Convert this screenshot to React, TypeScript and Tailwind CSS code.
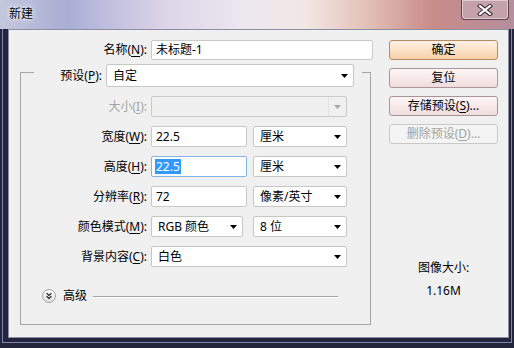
import type { ReactNode } from "react";

function Key({ k }: { k: string }) {
  return <span className="underline underline-offset-2">{k}</span>;
}

function Caret({ disabled }: { disabled?: boolean }) {
  return (
    <svg width="7" height="4" viewBox="0 0 7 4" className="shrink-0">
      <path d="M0 0h7L3.5 4z" fill={disabled ? "#a8a8a8" : "#000"} />
    </svg>
  );
}

function Select({ value, className }: { value?: string; className: string }) {
  return (
    <div
      className={`${className} flex items-center justify-between pl-[6px] pr-[5px] bg-white border border-[#c6c6c6] rounded-[2px]`}
    >
      <span>{value}</span>
      <Caret />
    </div>
  );
}

function Input({ value, focused }: { value: string; focused?: boolean }) {
  return (
    <div
      className={`w-[96px] h-[21px] flex items-center pl-[3px] bg-white border rounded-[2px] ${
        focused ? "border-[#84b4e6]" : "border-[#c9c9c9]"
      }`}
    >
      {focused ? (
        <span className="bg-[#3399ff] text-white px-[1px] leading-[15px]">{value}</span>
      ) : (
        <span className="px-[1px]">{value}</span>
      )}
    </div>
  );
}

function Row({ label, muted, children }: { label: ReactNode; muted?: boolean; children: ReactNode }) {
  return (
    <div className="mt-[9px] h-[21px] flex items-center">
      <div className={`w-[126px] text-right ${muted ? "text-[#a3a3a3]" : ""}`}>{label}</div>
      <div className="ml-[4px] flex gap-[6px]">{children}</div>
    </div>
  );
}

function Button({ children, kind }: { children: ReactNode; kind: "default" | "normal" | "disabled" }) {
  const look =
    kind === "default"
      ? "border-[#b58c66] bg-[linear-gradient(#fdf1e4,#fbe2c8_50%,#f5cfa6)]"
      : kind === "normal"
      ? "border-[#a9959a] bg-[linear-gradient(#fdf6f6,#f8e9e9_50%,#efdcdc)]"
      : "border-[#c9c9c9] bg-[#f4f4f4] text-[#a3a3a3]";
  return (
    <div className={`h-[20px] flex items-center justify-center border rounded-[3px] ${look}`}>
      {children}
    </div>
  );
}

export default function App() {
  return (
    <div className="w-[514px] h-[348px] overflow-hidden flex flex-col bg-[#23253c] text-[12px] text-black font-['Noto_Sans','Noto_Sans_CJK_SC',sans-serif]">
      {/* Title bar */}
      <div className="h-[29px] shrink-0 flex items-start bg-[linear-gradient(90deg,#c4c8dc_0%,#a9aed4_13%,#bdbcdd_20%,#dcd4e8_32%,#eee8ef_48%,#f1e6e2_60%,#e2beb4_72%,#c98c8a_84%,#b48e9c_100%)]">
        <span className="ml-[9px] mt-[6px] leading-[16px] [text-shadow:0_0_6px_#fff,0_0_3px_#fff]">新建</span>
        <div className="ml-auto mr-[5px] w-[48px] h-[20px] border border-t-0 border-[#5c4450] rounded-b-[4px] bg-[#c4a2ac] shadow-[inset_0_0_0_1px_rgba(255,255,255,0.45)] flex items-center justify-center">
          <svg width="16" height="12" viewBox="0 0 16 12">
            <path d="M3 2l10 8M13 2L3 10" stroke="#3b2a35" strokeWidth="4.2" strokeLinecap="square" />
            <path d="M3 2l10 8M13 2L3 10" stroke="#fff" strokeWidth="2.2" strokeLinecap="square" />
          </svg>
        </div>
      </div>

      {/* Frame body */}
      <div className="flex-1 mx-[2px] mb-[5px] border-x border-b border-[#7f86ad] pl-[5px] pr-[2px] pb-[4px] flex">
        <div className="flex-1 border border-[#8c8ea2] bg-[#f0f0f0] flex">
          {/* Left column */}
          <div className="w-[364px] flex flex-col">
            <div className="mt-[10px] h-[20px] flex items-center">
              <div className="w-[138px] text-right">
                名称(<Key k="N" />):
              </div>
              <div className="ml-[4px] w-[222px] h-[20px] flex items-center pl-[4px] bg-white border border-[#c9c9c9] rounded-[2px]">
                未标题-1
              </div>
            </div>

            {/* Preset group */}
            <div className="mt-[12px] ml-[11px] w-[351px] h-[253px] border border-[#a6a6a6] flex flex-col">
              <div className="-mt-[9px] ml-[13px] w-[328px] h-[23px] bg-[#f0f0f0] flex items-center">
                <div className="w-[68px] text-right">
                  预设(<Key k="P" />):
                </div>
                <Select value="自定" className="ml-[4px] w-[248px] h-[23px]" />
              </div>

              <Row
                muted
                label={
                  <>
                    大小(<Key k="I" />):
                  </>
                }
              >
                <div className="w-[196px] h-[21px] flex items-center justify-end bg-[#f0f0f0] border border-[#cacaca] rounded-[2px]">
                  <div className="h-full w-[18px] border-l border-[#e2e2e2] flex items-center justify-center">
                    <Caret disabled />
                  </div>
                </div>
              </Row>

              <Row
                label={
                  <>
                    宽度(<Key k="W" />):
                  </>
                }
              >
                <Input value="22.5" />
                <Select value="厘米" className="w-[94px] h-[21px]" />
              </Row>

              <Row
                label={
                  <>
                    高度(<Key k="H" />):
                  </>
                }
              >
                <Input value="22.5" focused />
                <Select value="厘米" className="w-[94px] h-[21px]" />
              </Row>

              <Row
                label={
                  <>
                    分辨率(<Key k="R" />):
                  </>
                }
              >
                <Input value="72" />
                <Select value="像素/英寸" className="w-[94px] h-[21px]" />
              </Row>

              <Row
                label={
                  <>
                    颜色模式(<Key k="M" />):
                  </>
                }
              >
                <Select value="RGB 颜色" className="w-[92px] h-[21px]" />
                <Select value="8 位" className="ml-[4px] w-[94px] h-[21px]" />
              </Row>

              <Row
                label={
                  <>
                    背景内容(<Key k="C" />):
                  </>
                }
              >
                <Select value="白色" className="w-[196px] h-[21px]" />
              </Row>

              {/* Advanced */}
              <div className="mt-[22px] ml-[21px] mr-[32px] h-[14px] flex items-center">
                <svg width="14" height="14" viewBox="0 0 14 14" className="shrink-0">
                  <defs>
                    <linearGradient id="adv" x1="0" y1="0" x2="0" y2="1">
                      <stop offset="0" stopColor="#ffffff" />
                      <stop offset="1" stopColor="#dcdcdc" />
                    </linearGradient>
                  </defs>
                  <circle cx="7" cy="7" r="6.5" fill="url(#adv)" stroke="#a4a4a4" />
                  <path d="M4.6 4.2L7 6.4l2.4-2.2M4.6 7.2L7 9.4l2.4-2.2" fill="none" stroke="#2f2f2f" strokeWidth="1.3" />
                </svg>
                <span className="ml-[7px] leading-[14px]">高级</span>
                <div className="ml-[6px] flex-1 h-px bg-[#a6a6a6] shadow-[0_1px_0_#fff]" />
              </div>
            </div>
          </div>

          {/* Right column */}
          <div className="ml-[16px] w-[109px] flex flex-col">
            <div className="mt-[10px] flex flex-col gap-[8px]">
              <Button kind="default">确定</Button>
              <Button kind="normal">复位</Button>
              <Button kind="normal">
                <span>
                  存储预设(<Key k="S" />)...
                </span>
              </Button>
              <Button kind="disabled">
                <span>
                  删除预设(<Key k="D" />)...
                </span>
              </Button>
            </div>
            <div className="mt-[116px] text-center leading-[16px]">图像大小:</div>
            <div className="mt-[7px] text-center leading-[16px]">1.16M</div>
          </div>
        </div>
      </div>
    </div>
  );
}
